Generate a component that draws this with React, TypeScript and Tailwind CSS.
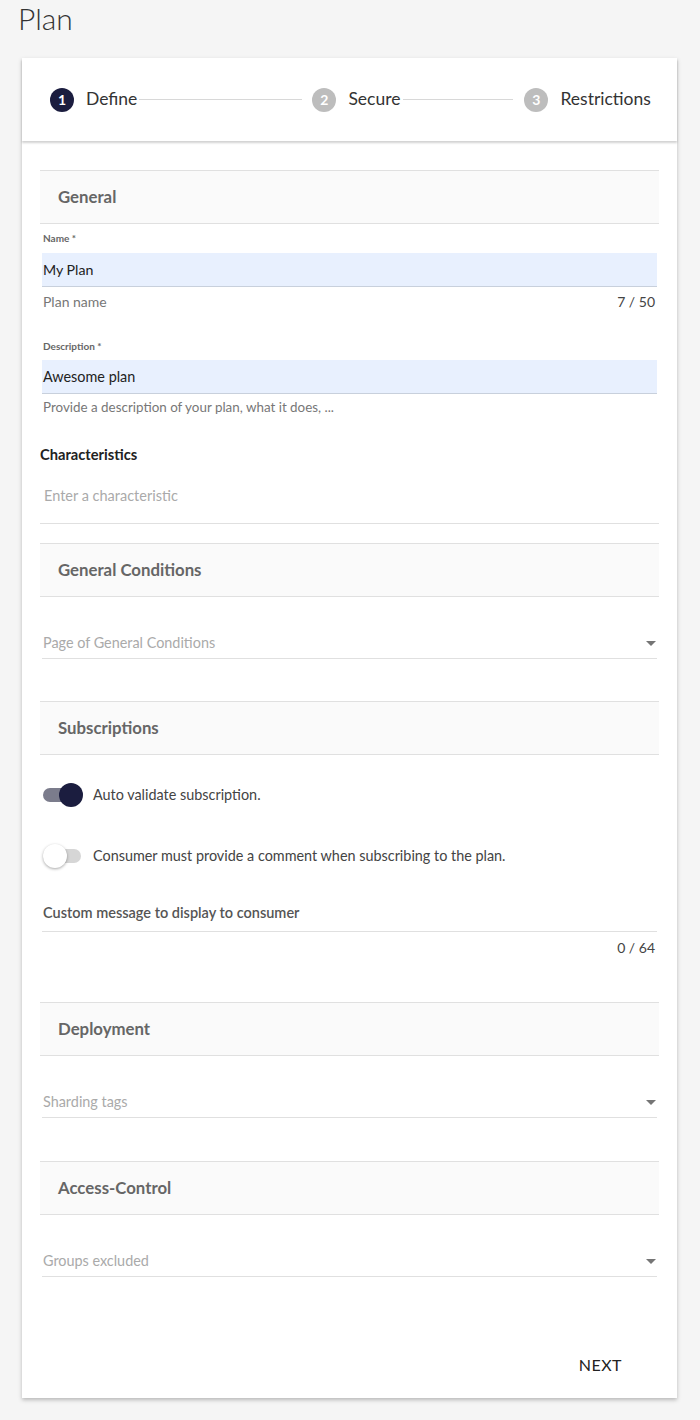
import React from "react";

const font = { fontFamily: "Lato, 'Noto Sans', sans-serif" };

function SectionHeader({ title }: { title: string }) {
  return (
    <div className="flex h-[54px] items-center border-y border-[#e0e0e0] bg-[#fafafa] pl-[18px]">
      <span className="text-[16.8px] font-bold text-[#666]">{title}</span>
    </div>
  );
}

function Arrow() {
  return (
    <svg width="10" height="5" viewBox="0 0 10 5" className="mr-[1px]">
      <path d="M0 0 L10 0 L5 5 Z" fill="#757575" />
    </svg>
  );
}

function SelectField({ placeholder }: { placeholder: string }) {
  return (
    <div className="mx-[2px] flex items-center justify-between border-b border-[#e0e0e0] pt-[36px] pb-[5px]">
      <span className="pl-[1px] text-[14.4px] leading-[20px] text-[#aaa]">{placeholder}</span>
      <Arrow />
    </div>
  );
}

function Toggle({ on, label }: { on: boolean; label: string }) {
  return (
    <div className="flex h-[24px] items-center">
      <div className="relative ml-[3px] h-[24px] w-[40px]">
        <div
          className={`absolute top-[5px] left-0 h-[14px] w-[38px] rounded-full ${
            on ? "bg-[#7b7c8c]" : "bg-[#d6d6d6]"
          }`}
        />
        <div
          className={`absolute top-0 h-[24px] w-[24px] rounded-full ${
            on ? "left-[16px] bg-[#1b1d3f]" : "left-0 bg-white shadow-[0_1px_3px_rgba(0,0,0,0.35)]"
          }`}
        />
      </div>
      <span className="ml-[10px] text-[14.4px] text-[#444]">{label}</span>
    </div>
  );
}

function Step({ n, label, active }: { n: number; label: string; active?: boolean }) {
  return (
    <div className="flex items-center">
      <div
        className={`flex h-[24px] w-[24px] items-center justify-center rounded-full text-[14px] font-bold text-white ${
          active ? "bg-[#1b1d3f]" : "bg-[#bdbdbd]"
        }`}
      >
        {n}
      </div>
      <span className="ml-[12px] text-[17.5px] text-[#333]">{label}</span>
    </div>
  );
}

export default function App() {
  return (
    <div className="min-h-[1420px] bg-[#f5f5f5] pl-[22px] pr-[23px]" style={font}>
      {/* Title */}
      <h1 className="-ml-[4px] pt-[2px] text-[30px] leading-[32px] font-light text-[#333]">Plan</h1>

      {/* Card */}
      <div className="mt-[24px] bg-white shadow-[0_2px_4px_rgba(0,0,0,0.25)]">
        {/* Stepper */}
        <div className="flex h-[83px] items-center pl-[28px] shadow-[0_2px_2px_rgba(0,0,0,0.18)]">
          <Step n={1} label="Define" active />
          <div className="mr-[10px] ml-[2px] h-[1px] w-[163px] bg-[#d8d8d8]" />
          <Step n={2} label="Secure" />
          <div className="mr-[11px] ml-[3px] h-[1px] w-[110px] bg-[#d8d8d8]" />
          <Step n={3} label="Restrictions" />
        </div>

        {/* Body */}
        <div className="px-[18px] pt-[29px] pb-[15px]">
          <SectionHeader title="General" />

          {/* Name */}
          <div className="mx-[2px]">
            <div className="mt-[8px] h-[12px] pl-[1px] text-[10px] leading-[12px] font-bold text-[#666]">Name *</div>
            <div className="mt-[9px] flex h-[34px] items-center border-b border-[#c8d0dc] bg-[#e8f0fe] pl-[1px] text-[14.2px] text-[#222]">
              My Plan
            </div>
            <div className="flex h-[28px] items-center justify-between pr-[2px] pl-[1px] text-[14px] text-[#777]">
              <span>Plan name</span>
              <span className="text-[#444]">7 / 50</span>
            </div>
          </div>

          {/* Description */}
          <div className="mx-[2px]">
            <div className="mt-[25px] h-[12px] pl-[1px] text-[10px] leading-[12px] font-bold text-[#666]">
              Description *
            </div>
            <div className="mt-[8px] flex h-[34px] items-center border-b border-[#c8d0dc] bg-[#e8f0fe] pl-[1px] text-[14.4px] text-[#222]">
              Awesome plan
            </div>
            <div className="flex h-[26px] items-center pl-[1px] text-[13.4px] text-[#777]">
              Provide a description of your plan, what it does, ...
            </div>
          </div>

          {/* Characteristics */}
          <div className="mt-[24px] text-[14.7px] leading-[20px] font-bold text-[#222]">Characteristics</div>
          <div className="border-b border-[#e0e0e0] pt-[22px] pb-[17px] pl-[4px] text-[14.5px] leading-[20px] text-[#aaa]">
            Enter a characteristic
          </div>

          <div className="mt-[19px]">
            <SectionHeader title="General Conditions" />
          </div>
          <SelectField placeholder="Page of General Conditions" />

          <div className="mt-[42px]">
            <SectionHeader title="Subscriptions" />
          </div>
          <div className="mt-[28px]">
            <Toggle on label="Auto validate subscription." />
          </div>
          <div className="mt-[37px]">
            <Toggle on={false} label="Consumer must provide a comment when subscribing to the plan." />
          </div>
          <div className="mx-[2px] mt-[35px] border-b border-[#e0e0e0] pb-[8px] pl-[1px] text-[14.5px] leading-[20px] font-semibold text-[#555]">
            Custom message to display to consumer
          </div>
          <div className="mx-[2px] mt-[6px] pr-[2px] text-right text-[14px] leading-[20px] text-[#444]">0 / 64</div>

          <div className="mt-[44px]">
            <SectionHeader title="Deployment" />
          </div>
          <SelectField placeholder="Sharding tags" />

          <div className="mt-[43px]">
            <SectionHeader title="Access-Control" />
          </div>
          <SelectField placeholder="Groups excluded" />

          <div className="mt-[70px] flex justify-end pr-[21px]">
            <button className="h-[36px] px-[16px] text-[16px] tracking-[0.5px] text-[#222]">NEXT</button>
          </div>
        </div>
      </div>
    </div>
  );
}
